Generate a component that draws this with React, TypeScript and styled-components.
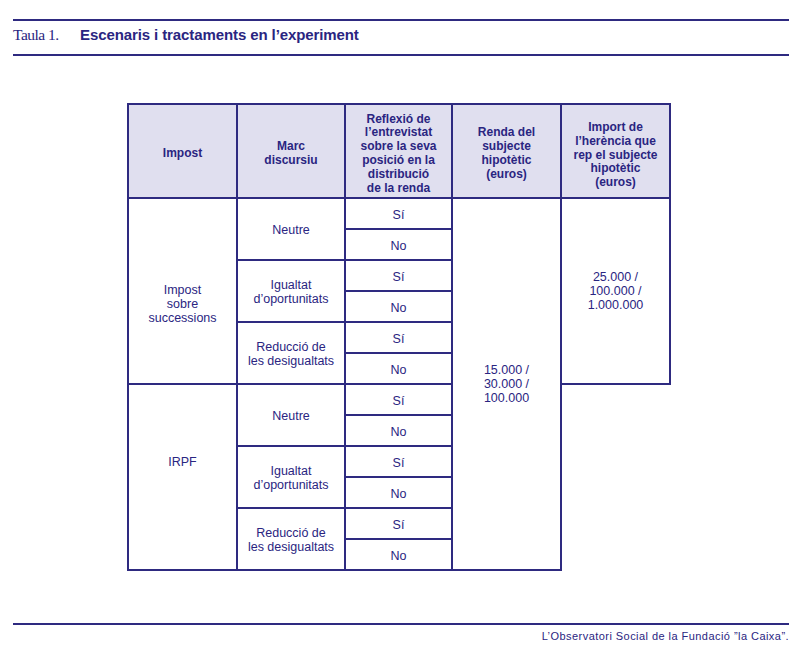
import React from 'react';
import styled, { createGlobalStyle } from 'styled-components';

const INK = '#2a2581';
const LINE = '#2e2a80';

const GlobalStyle = createGlobalStyle`
  html, body {
    margin: 0;
    padding: 0;
    background: #fff;
  }
  body {
    font-family: 'Liberation Sans', Arial, sans-serif;
    color: ${INK};
  }
`;

const Page = styled.div`
  width: 800px;
  height: 650px;
  box-sizing: border-box;
  padding: 19px 11px 0 13px;
`;

const TitleBar = styled.div`
  display: flex;
  align-items: flex-start;
  box-sizing: border-box;
  height: 37px;
  padding-top: 5px;
  border-top: 2px solid ${LINE};
  border-bottom: 2px solid ${LINE};
`;

const TitleLabel = styled.span`
  width: 67px;
  font-family: 'Liberation Serif', 'Times New Roman', serif;
  font-size: 15.5px;
  line-height: 18px;
  letter-spacing: -0.5px;
  color: ${INK};
`;

const TitleText = styled.span`
  font-size: 15px;
  line-height: 18px;
  font-weight: 700;
  letter-spacing: -0.1px;
  color: ${INK};
`;

const Grid = styled.div`
  display: grid;
  grid-template-columns: 111px 108px 107px 109px 109px;
  grid-template-rows: 96px repeat(12, 31px);
  margin: 47px 0 0 114px;
  width: 544px;
`;

const Cell = styled.div<{ $col: number; $row: number; $span?: number; $head?: boolean; $shift?: number }>`
  grid-column: ${(p) => p.$col};
  grid-row: ${(p) => `${p.$row} / span ${p.$span ?? 1}`};
  box-sizing: border-box;
  display: flex;
  align-items: center;
  justify-content: center;
  text-align: center;
  border-right: 2px solid ${LINE};
  border-bottom: 2px solid ${LINE};
  border-left: ${(p) => (p.$col === 1 ? `2px solid ${LINE}` : 'none')};
  border-top: ${(p) => (p.$head ? `2px solid ${LINE}` : 'none')};
  background: ${(p) => (p.$head ? '#e0dfef' : '#fff')};
  font-size: ${(p) => (p.$head ? '12px' : '12.5px')};
  font-weight: ${(p) => (p.$head ? 700 : 400)};
  line-height: ${(p) => (p.$head ? '13.8px' : '14px')};
  padding-top: ${(p) => Math.max(0, p.$shift ?? 3)}px;
  padding-bottom: ${(p) => Math.max(0, -(p.$shift ?? 3))}px;
  color: ${INK};
`;

const Footer = styled.div`
  margin-top: 52px;
  border-top: 2px solid ${LINE};
  text-align: right;
  font-size: 11px;
  letter-spacing: 0.45px;
  line-height: 14px;
  padding-top: 4px;
  color: ${INK};
`;

const headers = [
  ['Impost'],
  ['Marc', 'discursiu'],
  ['Reflexió de', 'l’entrevistat', 'sobre la seva', 'posició en la', 'distribució', 'de la renda'],
  ['Renda del', 'subjecte', 'hipotètic', '(euros)'],
  ['Import de', 'l’herència que', 'rep el subjecte', 'hipotètic', '(euros)'],
];

const taxes = [
  { name: ['Impost', 'sobre', 'successions'], shift: 26 },
  { name: ['IRPF'], shift: -30 },
];

const frames = [['Neutre'], ['Igualtat', 'd’oportunitats'], ['Reducció de', 'les desigualtats']];

const lines = (parts: string[]) =>
  parts.map((t, i) => (
    <React.Fragment key={i}>
      {i > 0 && <br />}
      {t}
    </React.Fragment>
  ));

export default function App() {
  return (
    <Page>
      <GlobalStyle />
      <TitleBar>
        <TitleLabel>Taula 1.</TitleLabel>
        <TitleText>Escenaris i tractaments en l’experiment</TitleText>
      </TitleBar>

      <Grid>
        {headers.map((h, i) => (
          <Cell key={i} $col={i + 1} $row={1} $head $shift={i === 4 ? 9 : 6}>
            <span>{lines(h)}</span>
          </Cell>
        ))}

        {taxes.map((tax, t) => {
          const base = 2 + t * 6;
          return (
            <React.Fragment key={t}>
              <Cell $col={1} $row={base} $span={6} $shift={tax.shift}>
                <span>{lines(tax.name)}</span>
              </Cell>
              {frames.map((f, k) => (
                <React.Fragment key={k}>
                  <Cell $col={2} $row={base + k * 2} $span={2} $shift={1}>
                    <span>{lines(f)}</span>
                  </Cell>
                  <Cell $col={3} $row={base + k * 2}>Sí</Cell>
                  <Cell $col={3} $row={base + k * 2 + 1}>No</Cell>
                </React.Fragment>
              ))}
            </React.Fragment>
          );
        })}

        <Cell $col={4} $row={2} $span={12} $shift={0}>
          <span>{lines(['15.000 /', '30.000 /', '100.000'])}</span>
        </Cell>
        <Cell $col={5} $row={2} $span={6} $shift={0}>
          <span>{lines(['25.000 /', '100.000 /', '1.000.000'])}</span>
        </Cell>
      </Grid>

      <Footer>L’Observatori Social de la Fundació ”la Caixa”.</Footer>
    </Page>
  );
}
